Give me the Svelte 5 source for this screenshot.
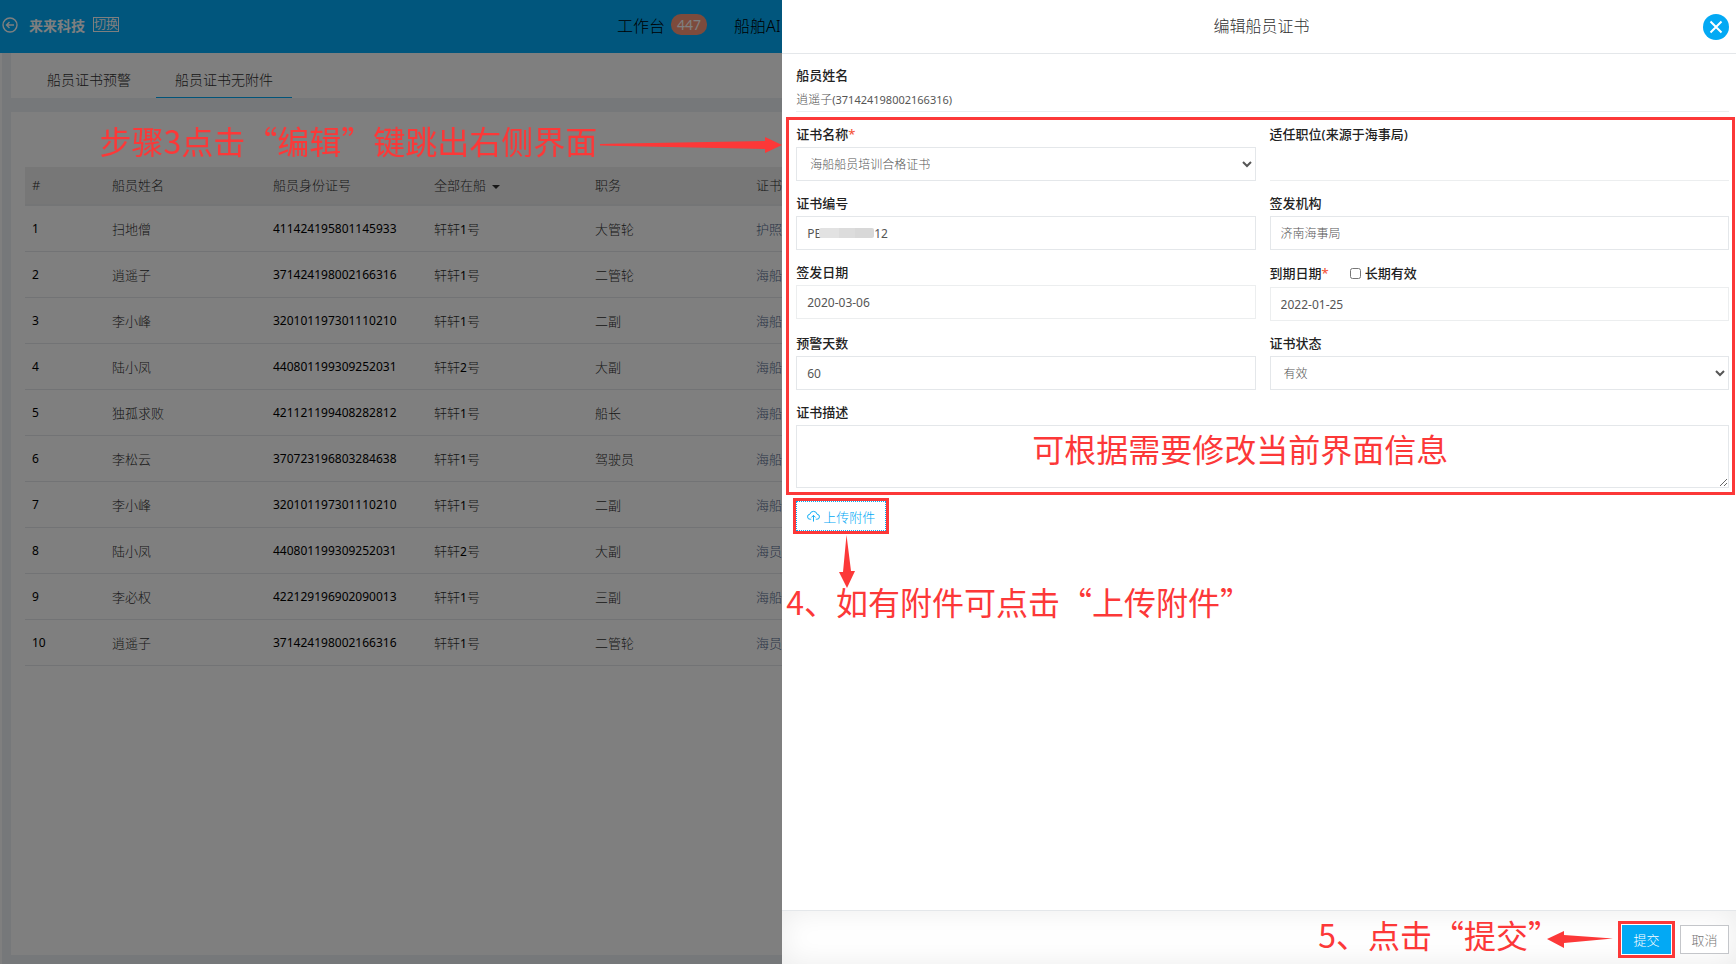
<script>
  let crew = [
    { name: '扫地僧', id: '411424195801145933', ship: 1, post: '大管轮', cert: '护照' },
    { name: '逍遥子', id: '371424198002166316', ship: 1, post: '二管轮', cert: '海船船员' },
    { name: '李小峰', id: '320101197301110210', ship: 1, post: '二副', cert: '海船船员' },
    { name: '陆小凤', id: '440801199309252031', ship: 2, post: '大副', cert: '海船船员' },
    { name: '独孤求败', id: '421121199408282812', ship: 1, post: '船长', cert: '海船船员' },
    { name: '李松云', id: '370723196803284638', ship: 1, post: '驾驶员', cert: '海船船员' },
    { name: '李小峰', id: '320101197301110210', ship: 1, post: '二副', cert: '海船船员' },
    { name: '陆小凤', id: '440801199309252031', ship: 2, post: '大副', cert: '海员证' },
    { name: '李必权', id: '422129196902090013', ship: 1, post: '三副', cert: '海船船员' },
    { name: '逍遥子', id: '371424198002166316', ship: 1, post: '二管轮', cert: '海员证' }
  ]

  let certNo = 'PE' + ' '.repeat(17) + '12'
  let issuer = '济南海事局'
  let issueDate = '2020-03-06'
  let expireDate = '2022-01-25'
  let warnDays = '60'
  let longTerm = false
  let description = ''
</script>

<div class="page" lang="zh-CN">
  <header class="topbar">
    <div class="brand">
      <svg width="16" height="16" viewBox="0 0 16 16" fill="none" stroke="currentColor" stroke-width="1.4">
        <circle cx="8" cy="8" r="7" />
        <path d="M12 8H4.5M7.5 5L4.5 8l3 3" />
      </svg>
      <strong>来来科技</strong>
      <a class="switch" href="#switch">切换</a>
    </div>
    <nav>
      <a href="#desk">工作台 <span class="badge">447</span></a>
      <a href="#ai">船舶AI</a>
    </nav>
  </header>

  <div class="main">
    <div class="tabs">
      <a href="#warn">船员证书预警</a>
      <a href="#none" class="active">船员证书无附件</a>
    </div>

    <section class="panel">
      <table>
        <thead>
          <tr>
            <th class="col-index">#</th>
            <th class="col">船员姓名</th>
            <th class="col">船员身份证号</th>
            <th class="col">全部在船 <span class="caret"></span></th>
            <th class="col">职务</th>
            <th>证书名称</th>
          </tr>
        </thead>
        <tbody>
          {#each crew as row, i}
          <tr>
            <td class="num">{i + 1}</td>
            <td>{row.name}</td>
            <td class="num">{row.id}</td>
            <td>轩轩<span class="num">{row.ship}</span>号</td>
            <td>{row.post}</td>
            <td><a href="#cert">{row.cert}</a></td>
          </tr>
          {/each}
        </tbody>
      </table>
    </section>
  </div>
</div>

<div class="mask"></div>

<div class="step step-edit" lang="zh-CN">
  <span>步骤3点击“编辑”键跳出右侧界面</span>
  <svg width="182" height="16" viewBox="0 0 182 16" fill="currentColor">
    <path d="M0 7L165 4V0L182 8L165 16V12L0 8.500z" />
  </svg>
</div>

<aside class="drawer" lang="zh-CN">
  <header class="drawer-head">
    <h1>编辑船员证书</h1>
    <button class="close" aria-label="关闭">
      <svg width="26" height="26" viewBox="0 0 26 26" fill="none" stroke="#fff" stroke-width="2">
        <path d="M7.500 7.500l11 11M18.500 7.500l-11 11" />
      </svg>
    </button>
  </header>

  <div class="drawer-body">
    <div class="crew-name">
      <div class="label">船员姓名</div>
      <p>逍遥子<span class="latin">(371424198002166316)</span></p>
    </div>

    <form class="fields">
      <div class="field">
        <label class="label" for="cert-name">证书名称<em>*</em></label>
        <select id="cert-name"><option>海船船员培训合格证书</option></select>
      </div>
      <div class="field">
        <div class="label">适任职位(来源于海事局)</div>
        <div class="empty"></div>
      </div>
      <div class="field">
        <label class="label" for="cert-no">证书编号</label>
        <div class="masked">
          <input id="cert-no" type="text" bind:value={certNo} />
          <span class="mosaic"></span>
        </div>
      </div>
      <div class="field">
        <label class="label" for="issuer">签发机构</label>
        <input id="issuer" class="light" type="text" bind:value={issuer} />
      </div>
      <div class="field">
        <label class="label" for="issue-date">签发日期</label>
        <input id="issue-date" class="date" type="text" bind:value={issueDate} />
      </div>
      <div class="field">
        <div class="label-row">
          <label class="label" for="expire-date">到期日期<em>*</em></label>
          <label class="label check"><input type="checkbox" bind:checked={longTerm} />长期有效</label>
        </div>
        <input id="expire-date" class="date" type="text" bind:value={expireDate} />
      </div>
      <div class="field">
        <label class="label" for="warn-days">预警天数</label>
        <input id="warn-days" type="text" bind:value={warnDays} />
      </div>
      <div class="field">
        <label class="label" for="status">证书状态</label>
        <select id="status"><option>有效</option></select>
      </div>
      <div class="field wide">
        <label class="label" for="description">证书描述</label>
        <textarea id="description" bind:value={description}></textarea>
        <span class="step step-modify">可根据需要修改当前界面信息</span>
      </div>
    </form>

    <div class="outline upload-outline">
      <button class="upload">
        <svg width="14" height="14" viewBox="0 0 14 14" fill="none" stroke="currentColor">
          <path d="M4.500 10.500H3.500a2.700 2.700 0 0 1-.4-5.400a4 4 0 0 1 7.800 0a2.700 2.700 0 0 1-.4 5.400h-1M7 13V6.500M4.800 8.500L7 6.300l2.200 2.200" />
        </svg>
        上传附件
      </button>
    </div>
    <svg class="arrow-down" width="16" height="53" viewBox="0 0 16 53" fill="currentColor">
      <path d="M7.500 0L12 36H16L8 53L0 37H4z" />
    </svg>
    <div class="step step-upload">4、如有附件可点击“上传附件”</div>
  </div>

  <footer>
    <span class="step">5、点击“提交”</span>
    <svg class="arrow-left" width="66" height="17" viewBox="0 0 66 17" fill="currentColor">
      <path d="M0 8L17 0V4L66 7.500L17 12V17z" />
    </svg>
    <div class="outline submit-outline">
      <button class="submit">提交</button>
    </div>
    <button class="cancel">取消</button>
  </footer>
</aside>

<style>
  :global(body) {
    --drawer-width: calc(55% - 1px);
    background: #edf1f5;
    color: #313131;
    font-family: "Noto Sans", "Noto Sans CJK SC", sans-serif;
    font-size: 13px;
    font-weight: 300;
    overflow: hidden;
  }

  * {
    box-sizing: border-box;
  }

  a {
    color: inherit;
    text-decoration: none;
  }

  button,
  input,
  select,
  textarea {
    font-family: inherit;
    font-weight: inherit;
    margin: 0;
  }

  .page {
    display: flex;
    flex-direction: column;
    min-height: 100vh;
    padding-right: var(--drawer-width);
  }

  .topbar {
    display: flex;
    align-items: center;
    height: 53px;
    padding-bottom: 4px;
    overflow: hidden;
    background: #03adfa;
    z-index: 1;
  }

  .brand {
    display: flex;
    align-items: center;
    flex: 0 0 617px;
    padding-left: 2px;
    color: #fff;
  }

  .brand strong {
    margin: 0 8px 0 11px;
    font-size: 14px;
    font-weight: 700;
  }

  .switch {
    height: 15px;
    border: 1px solid #fff;
    font-size: 12px;
    font-weight: 400;
    line-height: 13px;
  }

  nav {
    display: flex;
    align-items: center;
    gap: 27px;
    font-size: 16px;
    color: #000;
    white-space: nowrap;
  }

  nav a {
    display: flex;
    align-items: center;
    gap: 6px;
  }

  .badge {
    padding: 0 6px;
    border-radius: 10px;
    background: #fb9678;
    color: #fff;
    font-size: 14px;
    font-weight: 400;
    line-height: 21px;
  }

  .main {
    display: flex;
    flex-direction: column;
    flex: 1;
    padding: 0 0 9px 9px;
    border-left: 2px solid #fff;
  }

  .tabs {
    display: flex;
    gap: 6px;
    padding-left: 17px;
    background: #fff;
    font-size: 14px;
  }

  .tabs a {
    height: 45px;
    padding: 0 19px;
    line-height: 53px;
  }

  .tabs a.active {
    border-bottom: 1px solid #03a9f4;
  }

  .panel {
    flex: 1;
    margin-top: 14px;
    padding: 55px 0 0 14px;
    background: #fff;
  }

  table {
    width: 100%;
    table-layout: fixed;
    border-collapse: collapse;
  }

  th,
  td {
    padding: 0 0 0 7px;
    overflow: hidden;
    white-space: nowrap;
  }

  th {
    height: 38px;
    padding-bottom: 2px;
    border-bottom: 2px solid #e8eaec;
    background: #efefef;
    font-weight: 300;
    text-align: left;
  }

  td {
    height: 46px;
    border-bottom: 1px solid #e4e7ea;
  }

  td a {
    color: #54698d;
  }

  .col-index {
    width: 80px;
  }

  .col {
    width: 161px;
  }

  .num {
    font-size: 12px;
    font-weight: 400;
    color: #000;
  }

  .caret {
    display: inline-block;
    margin-left: 3px;
    border: 4px solid transparent;
    border-top-color: #313131;
    border-bottom: 0;
    vertical-align: middle;
  }

  .mask {
    position: fixed;
    inset: 0;
    background: rgba(0, 0, 0, 0.5);
    z-index: 2;
  }

  .step {
    color: #fc3838;
    font-family: "Noto Sans CJK SC", sans-serif;
    font-size: 32px;
    font-weight: 400;
    line-height: 32px;
    white-space: nowrap;
  }

  .step-edit {
    position: absolute;
    top: 124px;
    right: var(--drawer-width);
    display: flex;
    align-items: center;
    gap: 3px;
    z-index: 3;
  }

  .step-edit svg {
    margin-top: 10px;
  }

  .drawer {
    position: fixed;
    top: 0;
    right: 0;
    bottom: 0;
    width: var(--drawer-width);
    display: flex;
    flex-direction: column;
    background: #fff;
    z-index: 3;
  }

  .drawer-head {
    display: flex;
    align-items: center;
    height: 54px;
    padding: 0 7px 0 38px;
    border-bottom: 1px solid #e4e7ea;
  }

  h1 {
    flex: 1;
    margin: 0;
    padding-bottom: 4px;
    font-size: 16px;
    font-weight: 300;
    text-align: center;
  }

  .close {
    width: 26px;
    height: 26px;
    padding: 0;
    border: 0;
    border-radius: 50%;
    background: #03a9f4;
  }

  .close svg {
    display: block;
  }

  .drawer-body {
    flex: 1;
    padding: 8px 1px 0 4px;
    color: #565656;
    font-size: 12px;
  }

  .crew-name {
    margin: 0 6px 5px 10px;
    border-bottom: 1px solid #eceeef;
  }

  .crew-name p {
    margin: 0;
    line-height: 23px;
  }

  .latin {
    font-size: 11px;
    font-weight: 400;
  }

  .label {
    display: block;
    color: #222;
    font-size: 13px;
    font-weight: 500;
    line-height: 26px;
  }

  .label em {
    color: #f4573b;
    font-style: normal;
  }

  .fields {
    display: grid;
    grid-template-columns: 1fr 1fr;
    gap: 9px 14px;
    padding: 1px 3px 4px 7px;
    border: 3px solid #fc3838;
  }

  .field input:not([type="checkbox"]),
  select,
  textarea {
    display: block;
    width: 100%;
    height: 34px;
    padding: 0 10px;
    border: 1px solid #e4e7ea;
    border-radius: 0;
    background: #fff;
    color: #565656;
    font-size: 12px;
    font-weight: 400;
    outline: 0;
  }

  .field input.light,
  .field select {
    font-weight: 300;
  }

  .field select {
    padding: 0 9px;
  }

  .field input.date {
    border-color: #eceeef;
  }

  .empty {
    height: 34px;
    border-bottom: 1px solid #eceeef;
  }

  .masked,
  .wide {
    position: relative;
  }

  .mosaic {
    position: absolute;
    top: 12px;
    left: 23px;
    width: 55px;
    height: 10px;
    border-radius: 2px;
    background: linear-gradient(90deg, #e2e2e2 20px, #dcdcdc 20px, #dcdcdc 36px, #d8d8d8 36px);
  }

  .label-row {
    display: flex;
    gap: 21px;
  }

  .label-row .label {
    line-height: 28px;
  }

  .check {
    display: flex;
    align-items: center;
    gap: 4px;
  }

  .check input {
    width: 11px;
    height: 11px;
  }

  .wide {
    grid-column: span 2;
  }

  .wide textarea {
    height: 63px;
    resize: vertical;
  }

  .step-modify {
    position: absolute;
    top: 33px;
    left: 236px;
  }

  .outline {
    border: 3px solid #fc3838;
  }

  .upload-outline {
    width: 96px;
    margin: 3px 0 0 7px;
  }

  .upload {
    display: flex;
    align-items: center;
    gap: 3px;
    width: 100%;
    height: 30px;
    padding: 0 10px;
    border: 1px dotted #03a9f4;
    background: #fff;
    color: #03a9f4;
    font-size: 13px;
    white-space: nowrap;
  }

  .arrow-down {
    display: block;
    margin: 1px 0 0 53px;
    color: #fc3838;
  }

  .step-upload {
    margin-top: -3px;
  }

  footer {
    display: flex;
    align-items: center;
    justify-content: flex-end;
    height: 54px;
    padding: 4px 7px 0 0;
    border-top: 1px solid #e4e7ea;
    background: #fff;
    box-shadow: inset 0 0 30px rgba(0, 0, 0, 0.08);
  }

  footer .step {
    padding-bottom: 12px;
  }

  /* the closing quote leaves half of its full-width cell empty */
  .arrow-left {
    margin: 0 5px 0 -13px;
    color: #fc3838;
  }

  .submit-outline {
    padding: 1px;
    background: #fff;
  }

  .submit,
  .cancel {
    display: block;
    width: 49px;
    height: 29px;
    padding: 0;
    border: 0;
    background: #03a9f4;
    color: #fff;
    font-size: 13px;
  }

  .cancel {
    margin-left: 5px;
    border: 1px solid #c4c6ca;
    background: #fff;
    color: #777;
  }
</style>
